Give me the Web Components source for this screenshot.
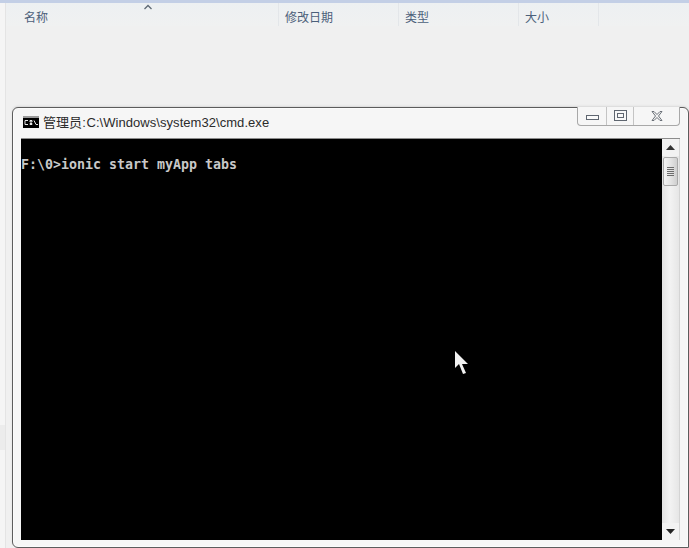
<!DOCTYPE html>
<html lang="zh-CN">
<head>
<meta charset="utf-8">
<title>cmd</title>
<style>
  html, body { margin: 0; height: 100%; }
  body {
    position: relative;
    width: 689px;
    height: 548px;
    overflow: hidden;
    background: #f0f0f0;
    font-family: "Liberation Sans", "Noto Sans CJK SC", sans-serif;
  }
</style>
</head>
<body>
<file-header>
  <header-col style="--w:273px;--pad:18px">名称</header-col>
  <header-col style="--w:120px;--pad:6px">修改日期</header-col>
  <header-col style="--w:120px;--pad:6px">类型</header-col>
  <header-col style="--w:80px;--pad:6px">大小</header-col>
</file-header>
<cmd-window title-text="管理员: C:\Windows\system32\cmd.exe">F:\0&gt;ionic start myApp tabs</cmd-window>
<mouse-cursor></mouse-cursor>

<script>
  class FileHeader extends HTMLElement {
    constructor() {
      super();
      this.attachShadow({mode: 'open'}).innerHTML = `
        <style>
          :host {
            display: flex;
            height: 26px;
            box-sizing: border-box;
            padding-left: 6px;
            position: relative;
            background: linear-gradient(#c3cfe6 0 3px, #edf0f2 3px, #f0f1f1 100%);
          }
          .rail {
            position: absolute; left: 0; top: 3px; width: 6px; height: 545px;
            background: #f5f5f5; border-right: 1px solid #e4e4e4; box-sizing: border-box;
          }
          .rail i {
            position: absolute; left: 0; top: 422px; width: 5px; height: 25px;
            background: #ececec;
          }
          .sort {
            position: absolute; left: 144px; top: 4px;
          }
        </style>
        <div class="rail"><i></i></div>
        <svg class="sort" width="8" height="6" viewBox="0 0 8 6">
          <path d="M.5 5 4 1.500 7.500 5" fill="none" stroke="#5f6a74" stroke-width="1.3"/>
        </svg>
        <slot></slot>`;
    }
  }

  class HeaderCol extends HTMLElement {
    constructor() {
      super();
      this.attachShadow({mode: 'open'}).innerHTML = `
        <style>
          :host {
            display: flex;
            align-items: center;
            box-sizing: border-box;
            width: var(--w);
            height: 23px;
            margin-top: 3px;
            padding-left: var(--pad);
            padding-top: 4px;
            border-right: 1px solid #e3e6e9;
            font: 12px "Noto Sans CJK SC", "Liberation Sans", sans-serif;
            color: #4c607a;
          }
        </style>
        <slot></slot>`;
    }
  }

  class CmdWindow extends HTMLElement {
    constructor() {
      super();
      this.attachShadow({mode: 'open'}).innerHTML = `
        <style>
          :host {
            display: flex;
            flex-direction: column;
            position: absolute;
            left: 12px; top: 107px;
            width: 677px; height: 441px;
            box-sizing: border-box;
            padding: 0 8px 7px 8px;
            background: #f6f6f6;
            border: 1px solid #5c5c5c;
            border-radius: 6px 6px 0 6px;
            box-shadow: inset 0 0 0 1px #fbfbfb, 0 -1px 2px #d8d8d8;
          }
          .title {
            display: flex;
            align-items: center;
            gap: 4px;
            height: 30px;
            flex: none;
            position: relative;
            font-size: 13px;
            color: #2b2b2b;
            padding-left: 2px;
          }
          .title span { font-family: "Liberation Sans", "Noto Sans CJK SC", sans-serif; white-space: nowrap; word-spacing: -3px; letter-spacing: .05px; position: relative; top: -2px; }
          .title > svg { position: relative; top: -1px; }
          .buttons {
            position: absolute;
            right: 0; top: -1px;
            display: flex;
            height: 19px;
            box-sizing: border-box;
            border: 1px solid #a8a8a8;
            border-top: 0;
            border-radius: 0 0 4px 4px;
            background: #f6f6f6;
          }
          .btn {
            display: flex; align-items: center; justify-content: center;
            box-sizing: border-box;
          }
          .btn + .btn { border-left: 1px solid #c4c4c4; }
          .min { width: 28px; }
          .max { width: 27px; }
          .close { width: 46px; }
          .body { flex: 1; display: flex; min-height: 0; border-top: 1px solid #8c8c8c; }
          .console {
            flex: 1;
            background: #000;
            color: #c8c8c8;
            font: bold 13.29px/16px "DejaVu Sans Mono", "Liberation Mono", monospace;
            padding-top: 18px;
            white-space: pre;
            box-sizing: border-box;
          }
          .bar {
            width: 17px; flex: none;
            display: flex; flex-direction: column;
            background: linear-gradient(90deg, #e3e3e3, #f3f3f3 45%, #e6e6e6);
            border-right: 1px solid #d4d4d4;
            box-sizing: content-box;
          }
          .arrow { height: 17px; flex: none; display: flex; align-items: center; justify-content: center; background: #f2f2f2; }
          .thumb {
            height: 29px; flex: none; margin: 1px 1px 0;
            display: flex; align-items: center; justify-content: center;
            box-sizing: border-box;
            border: 1px solid #a9a9a9;
            border-radius: 2px;
            background: linear-gradient(90deg, #f4f4f4, #e4e4e4 50%, #cfcfcf);
          }
          .track { flex: 1; }
        </style>
        <div class="title">
          <svg width="16" height="14" viewBox="0 0 16 14">
            <rect width="16" height="2" y="1" fill="#9a9a9a"/>
            <rect width="16" height="10" y="3" fill="#000"/>
            <path d="M2 5.500h3M2 5.500v4h3M7 5.500h2v1.500H7zM7 8.500h2v1H7zM11 5.500l2 4h2" fill="none" stroke="#e8e8e8"/>
          </svg>
          <span id="label"></span>
          <div class="buttons">
            <div class="btn min">
              <svg width="13" height="7" viewBox="0 0 13 7"><rect x=".5" y="2.500" width="12" height="4" fill="#fafafa" stroke="#5f6670"/></svg>
            </div>
            <div class="btn max">
              <svg width="13" height="12" viewBox="0 0 13 12"><rect x=".5" y=".5" width="12" height="10" fill="#f8f8f8" stroke="#5f6670"/><rect x="3.500" y="3.500" width="6" height="4" fill="none" stroke="#5f6670"/></svg>
            </div>
            <div class="btn close">
              <svg width="14" height="12" viewBox="0 0 14 12"><path d="M2 1.500h2L7 4.500l3-3h2L8.500 6 12 10.500h-2L7 7.500l-3 3H2L5.500 6z" fill="#f3f3f3" stroke="#6a7078"/></svg>
            </div>
          </div>
        </div>
        <div class="body">
          <div class="console"><slot></slot></div>
          <div class="bar">
            <div class="arrow"><svg width="9" height="5" viewBox="0 0 9 5"><path d="M0 5 4.500 0 9 5z" fill="#333"/></svg></div>
            <div class="thumb">
              <svg width="7" height="9" viewBox="0 0 7 9"><path d="M0 .5h7M0 2.500h7M0 4.500h7M0 6.500h7M0 8.500h7" stroke="#6c6c6c"/></svg>
            </div>
            <div class="track"></div>
            <div class="arrow"><svg width="9" height="5" viewBox="0 0 9 5"><path d="M0 0 4.500 5 9 0z" fill="#222"/></svg></div>
          </div>
        </div>`;
    }

    connectedCallback() {
      this.shadowRoot.getElementById('label').textContent = this.getAttribute('title-text');
    }
  }

  class MouseCursor extends HTMLElement {
    constructor() {
      super();
      this.attachShadow({mode: 'open'}).innerHTML = `
        <style>
          :host { display: block; position: absolute; left: 454px; top: 351px; width: 16px; height: 25px; }
        </style>
        <svg width="16" height="25" viewBox="0 0 16 25">
          <path d="M1 0v17l4-4 4 10 3-1-4-9h6z" fill="#f2f2f2"/>
        </svg>`;
    }
  }

  customElements.define('file-header', FileHeader);
  customElements.define('header-col', HeaderCol);
  customElements.define('cmd-window', CmdWindow);
  customElements.define('mouse-cursor', MouseCursor);
</script>
</body>
</html>
